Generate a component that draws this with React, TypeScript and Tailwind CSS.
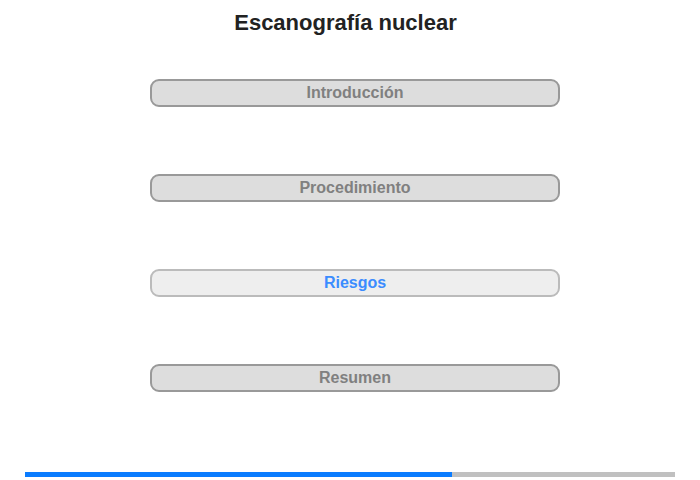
const sections = [
  { name: "Introducción", active: false },
  { name: "Procedimiento", active: false },
  { name: "Riesgos", active: true },
  { name: "Resumen", active: false },
];

export default function App() {
  return (
    <div className="w-[700px] h-[480px] bg-white font-['Liberation_Sans',Arial,sans-serif] flex flex-col">
      {/* Title */}
      <h1 className="w-[691px] mt-[9px] text-center text-[22px] leading-[28px] font-bold text-[#222222]">
        Escanografía nuclear
      </h1>

      {/* Section buttons */}
      <div className="ml-[150px] mt-[42px] w-[410px] flex flex-col gap-[67px]">
        {sections.map((s) => (
          <div
            key={s.name}
            className={
              s.active
                ? "h-[28px] rounded-[9px] border-2 border-[#bbbbbb] bg-[#eeeeee] flex items-center justify-center text-[16px] font-bold text-[#3b8cff]"
                : "h-[28px] rounded-[9px] border-2 border-[#999999] bg-[#dddddd] flex items-center justify-center text-[16px] font-bold text-[#808080]"
            }
          >
            {s.name}
          </div>
        ))}
      </div>

      {/* Progress bar */}
      <div className="ml-[25px] mt-auto mb-[3px] w-[650px] h-[5px] bg-[#c0c0c0] flex">
        <div className="w-[427px] h-full bg-[#0a7cff]" />
      </div>
    </div>
  );
}
